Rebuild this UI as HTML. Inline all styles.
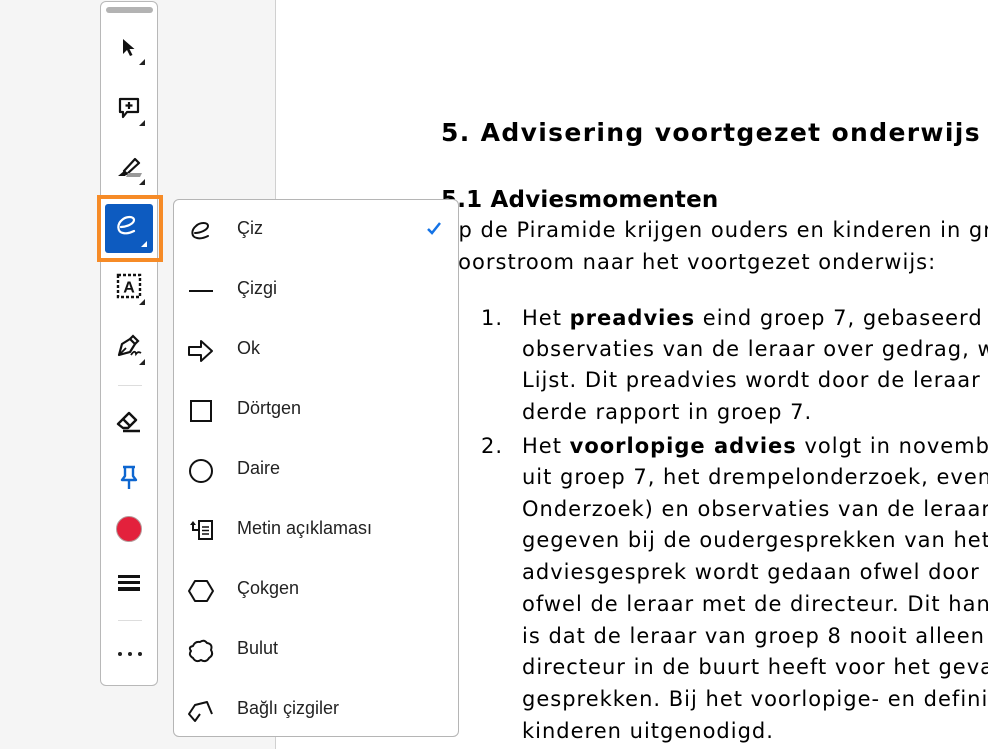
<!DOCTYPE html>
<html><head><meta charset="utf-8"><style>
*{margin:0;padding:0;box-sizing:border-box}
body{width:988px;height:749px;overflow:hidden;position:relative;background:#fff;font-family:"DejaVu Sans",Verdana,sans-serif;color:#000}
.side{position:absolute;left:0;top:0;width:276px;height:749px;background:#f5f5f5;border-right:1px solid #d0d0d0}
.doc{position:absolute;left:0;top:0;width:988px;height:749px;overflow:hidden}
.doc div{position:absolute;white-space:nowrap;font-size:21px;letter-spacing:1px;line-height:32px}
.tb{position:absolute;left:100px;top:1px;width:58px;height:685px;background:#fff;border:1px solid #b8b8b8;border-radius:6px}
.grip{position:absolute;left:5px;top:5px;width:47px;height:6px;border-radius:3px;background:#b3b3b3}
.ic{position:absolute;left:14px;width:28px;height:28px}
.tri{position:absolute;width:0;height:0;border-left:6px solid transparent;border-bottom:6px solid #222}
.sep{position:absolute;left:17px;width:24px;height:1px;background:#ddd}
.menu{position:absolute;left:173px;top:199px;width:286px;height:538px;background:#fff;border:1px solid #b5b5b5;border-radius:6px;font-family:"Liberation Sans",Arial,sans-serif}
.it{position:absolute;left:0;width:284px;height:60px}
.it span{position:absolute;left:63px;top:18px;font-size:18px;color:#222}
.it svg{position:absolute;left:13px;top:17px}
</style></head><body>
<div class="side"></div>
<div class="doc">
<div style="left:441px;top:113px;font-size:25px;letter-spacing:1.35px;font-weight:bold;line-height:40px">5. Advisering voortgezet onderwijs</div>
<div style="left:441px;top:182px;font-size:23px;letter-spacing:0.2px;font-weight:bold;line-height:36px">5.1 Adviesmomenten</div>
<div style="left:441px;top:214px">Op de Piramide krijgen ouders en kinderen in groep</div>
<div style="left:441px;top:246px">Doorstroom naar het voortgezet onderwijs:</div>
<div style="left:481px;top:302px">1.</div>
<div style="left:522px;top:302px">Het <b>preadvies</b> eind groep 7, gebaseerd op</div>
<div style="left:522px;top:333px">observaties van de leraar over gedrag, werkhouding</div>
<div style="left:522px;top:364px">Lijst. Dit preadvies wordt door de leraar gegeven</div>
<div style="left:522px;top:396px">derde rapport in groep 7.</div>
<div style="left:481px;top:430px">2.</div>
<div style="left:522px;top:430px">Het <b>voorlopige advies</b> volgt in november</div>
<div style="left:522px;top:461px">uit groep 7, het drempelonderzoek, eventueel</div>
<div style="left:522px;top:493px">Onderzoek) en observaties van de leraar</div>
<div style="left:522px;top:524px">gegeven bij de oudergesprekken van het</div>
<div style="left:522px;top:556px">adviesgesprek wordt gedaan ofwel door de</div>
<div style="left:522px;top:588px">ofwel de leraar met de directeur. Dit handig</div>
<div style="left:522px;top:620px">is dat de leraar van groep 8 nooit alleen staat</div>
<div style="left:522px;top:651px">directeur in de buurt heeft voor het geval</div>
<div style="left:522px;top:683px">gesprekken. Bij het voorlopige- en definitieve</div>
<div style="left:522px;top:715px">kinderen uitgenodigd.</div>
</div>

<div class="tb">
<div class="grip"></div>
<svg class="ic" style="top:32px" viewBox="0 0 28 28"><path d="M8 5 L8 20 L12 16 L15 22 L17.5 21 L14.5 15 L19.5 15 Z" fill="#111"/></svg>
<div class="tri" style="left:38px;top:57px"></div>
<svg class="ic" style="top:92px" viewBox="0 0 28 28"><path d="M5 5 H23 V18 H12 L8 23 V18 H5 Z" fill="none" stroke="#111" stroke-width="2.2" stroke-linejoin="round"/><path d="M14 8 V15 M10.5 11.5 H17.5" stroke="#111" stroke-width="2.2"/></svg>
<div class="tri" style="left:38px;top:118px"></div>
<svg class="ic" style="top:150px" viewBox="0 0 28 28"><path d="M9 19 L20 7 L24 11 L12 22 Z" fill="none" stroke="#111" stroke-width="2.2" stroke-linejoin="round"/><path d="M3 24 L9 19 L12 22 L10 24 Z" fill="#111"/><path d="M13 21 H27 L25 25 H11 Z" fill="#999"/></svg>
<div class="tri" style="left:38px;top:177px"></div>
<svg class="ic" style="top:270px" viewBox="0 0 28 28"><rect x="3" y="3" width="22" height="22" fill="none" stroke="#111" stroke-width="2.4" stroke-dasharray="3 2"/><text x="14" y="20.5" text-anchor="middle" font-family="Liberation Sans" font-size="16" font-weight="bold" fill="#111">A</text></svg>
<div class="tri" style="left:38px;top:297px"></div>
<svg class="ic" style="top:330px" viewBox="0 0 28 28"><path d="M4 23 L7 12 L15 7 L20 12 L15 20 L4 23 Z" fill="none" stroke="#111" stroke-width="2.2" stroke-linejoin="round"/><path d="M15 7 L18 4 L23 9 L20 12" fill="none" stroke="#111" stroke-width="2.2"/><path d="M4 23 L11 16" stroke="#111" stroke-width="1.8"/><path d="M16 23 Q20 17 21 22 Q23 19 26 21" fill="none" stroke="#111" stroke-width="1.8"/></svg>
<div class="tri" style="left:38px;top:357px"></div>
<div class="sep" style="top:383px"></div>
<svg class="ic" style="top:405px" viewBox="0 0 28 28"><path d="M3 17 L14 6 L21 13 L13 21 H8 Z" fill="none" stroke="#111" stroke-width="2.4" stroke-linejoin="round"/><path d="M8 12 L15 19" stroke="#111" stroke-width="2.4"/><path d="M8 24 H25" stroke="#111" stroke-width="2.4"/></svg>
<svg class="ic" style="top:461px" viewBox="0 0 28 28"><path d="M8 4 H20 M10 4 V13 L7 17 H21 L18 13 V4 M14 17 V26" fill="none" stroke="#0d66d0" stroke-width="2.4" stroke-linejoin="round"/></svg>
<div style="position:absolute;left:15px;top:514px;width:26px;height:26px;border-radius:50%;background:#e3213c;border:1px solid #b59a9a"></div>
<div style="position:absolute;left:17px;top:573px;width:22px;height:3px;background:#111"></div>
<div style="position:absolute;left:17px;top:579px;width:22px;height:3px;background:#111"></div>
<div style="position:absolute;left:17px;top:585px;width:22px;height:4px;background:#111"></div>
<div class="sep" style="top:618px"></div>
<div style="position:absolute;left:17px;top:650px;width:24px;height:4px;display:flex;justify-content:space-between"><i style="width:4px;height:4px;background:#222;border-radius:50%"></i><i style="width:4px;height:4px;background:#222;border-radius:50%"></i><i style="width:4px;height:4px;background:#222;border-radius:50%"></i></div>
</div>
<div style="position:absolute;left:97px;top:195px;width:66px;height:67px;border:4px solid #f68b27"></div>
<div style="position:absolute;left:105px;top:204px;width:48px;height:49px;background:#0d5bc0;border-radius:3px"></div>
<svg style="position:absolute;left:112px;top:212px" width="32" height="30" viewBox="0 0 32 30"><path d="M9 15 C14 15 22 12 22 8 C22 4 14 4 10 8 C5 12 5 20 11 21 C15 22 20 20 22 19" fill="none" stroke="#fff" stroke-width="2.2" stroke-linecap="round"/></svg>
<div class="tri" style="left:141px;top:241px;border-bottom-color:#fff"></div>

<div class="menu">
<div class="it" style="top:0"><svg width="28" height="28" viewBox="0 0 28 28"><path d="M8 16 C13 16 21 13 21 9 C21 5 13 5 9 9 C4 13 4 20 10 21 C14 22 19 20 21 19" fill="none" stroke="#111" stroke-width="2" stroke-linecap="round"/></svg><span>Çiz</span>
<svg style="left:251px;top:20px" width="18" height="18" viewBox="0 0 18 18"><path d="M3 9 L7 13 L15 3" fill="none" stroke="#1473e6" stroke-width="2.5"/></svg></div>
<div class="it" style="top:60px"><svg width="28" height="28" viewBox="0 0 28 28"><path d="M2 14 H26" stroke="#111" stroke-width="2"/></svg><span>Çizgi</span></div>
<div class="it" style="top:120px"><svg width="28" height="28" viewBox="0 0 28 28"><path d="M2 10 H14 V4 L25 14 L14 24 V18 H2 Z" fill="none" stroke="#111" stroke-width="2" stroke-linejoin="round"/></svg><span>Ok</span></div>
<div class="it" style="top:180px"><svg width="28" height="28" viewBox="0 0 28 28"><rect x="4" y="4" width="20" height="20" fill="none" stroke="#111" stroke-width="2"/></svg><span>Dörtgen</span></div>
<div class="it" style="top:240px"><svg width="28" height="28" viewBox="0 0 28 28"><circle cx="14" cy="14" r="11" fill="none" stroke="#111" stroke-width="2"/></svg><span>Daire</span></div>
<div class="it" style="top:300px"><svg width="28" height="28" viewBox="0 0 28 28"><rect x="12" y="4" width="13" height="18" fill="none" stroke="#111" stroke-width="2"/><path d="M15 10 H22 M15 13.5 H22 M15 17 H22" stroke="#111" stroke-width="1.6"/><path d="M12 13 H6 V6" fill="none" stroke="#111" stroke-width="2"/><path d="M3 8 L6 4 L9 8 Z" fill="#111"/></svg><span>Metin açıklaması</span></div>
<div class="it" style="top:360px"><svg width="28" height="28" viewBox="0 0 28 28"><path d="M8 4 H20 L26 14 L20 24 H8 L2 14 Z" fill="none" stroke="#111" stroke-width="2" stroke-linejoin="round"/></svg><span>Çokgen</span></div>
<div class="it" style="top:420px"><svg width="28" height="28" viewBox="0 0 28 28"><path d="M6 9 Q8 4 13 5 Q17 2 20 6 Q26 7 24 13 Q27 18 22 21 Q19 26 14 23 Q9 26 6 21 Q1 18 4 14 Q1 10 6 9 Z" fill="none" stroke="#111" stroke-width="2" stroke-linejoin="round"/></svg><span>Bulut</span></div>
<div class="it" style="top:480px"><svg width="28" height="28" viewBox="0 0 28 28"><path d="M25 17 L20 5 L8 8 L2 17 L8 24 L13 17" fill="none" stroke="#111" stroke-width="2" stroke-linejoin="round"/></svg><span>Bağlı çizgiler</span></div>
</div>
</body></html>
